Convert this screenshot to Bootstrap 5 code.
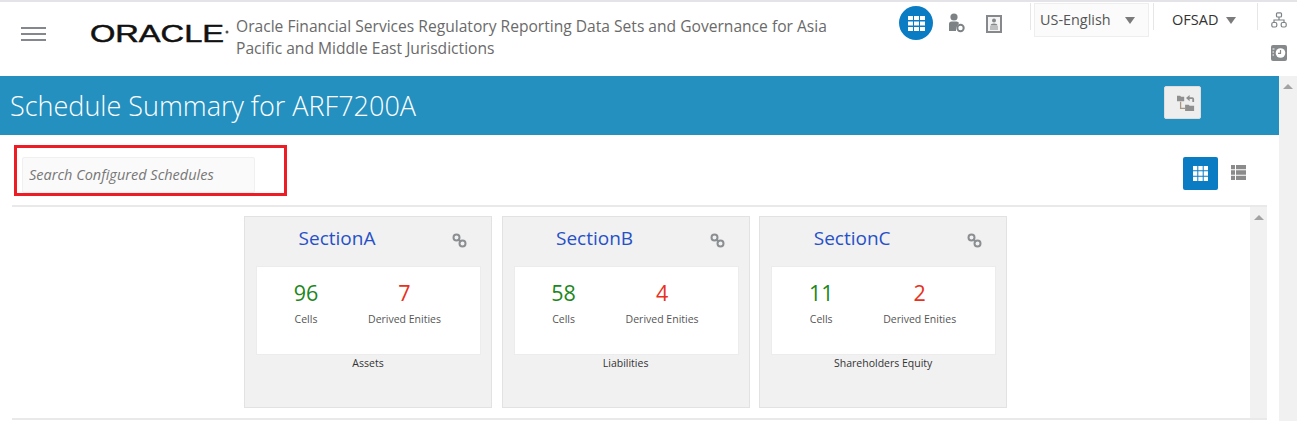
<!DOCTYPE html>
<html lang="en">
<head>
    <meta charset="UTF-8">
    <title>Schedule Summary</title>
    <link href="https://cdn.jsdelivr.net/npm/bootstrap@5.3.0/dist/css/bootstrap.min.css" rel="stylesheet">
    <style>
        html, body { height: 421px; overflow: hidden; }
        body { font-family: "Open Sans", "Liberation Sans", sans-serif; color: #333; background: #fff; }
        .top-head { height: 76px; border-top: 2px solid #e4e4e8; }
        .burger { width: 25px; margin: 25px 0 0 21px; }
        .burger span { display: block; height: 2px; background: #84888c; margin-bottom: 4px; }
        .brand-logo { margin: 22px 0 0 44px; width: 142px; height: 24px; overflow: visible; }
        .app-title { width: 610px; margin: 13px 0 0 4px; font-size: 15.6px; line-height: 22px; color: #6a6a6a; }
        .top-tools { margin-left: auto; }
        .apps-round { width: 34px; height: 34px; border-radius: 50%; background: #0a7cc4; margin: 4px 0 0 0; }
        .tool-person { margin: 11px 0 0 15px; }
        .tool-card { margin: 13px 28px 0 21px; }
        .v-sep { width: 1px; height: 27px; background: #e6e6e6; margin-top: 1px; }
        .lang-box { width: 115px; height: 34px; margin: 1px 4px 0 3px; padding: 0 5px; background: #fbfbfb; border: 1px solid #eee; font-size: 14.4px; color: #555; }
        .caret-dn { width: 0; height: 0; border-left: 5.5px solid transparent; border-right: 5.5px solid transparent; border-top: 7px solid #7b7b7b; }
        .user-box { width: 103px; padding-left: 18px; font-size: 14.5px; color: #333; height: 34px; margin-top: 1px; }
        .side-tools { width: 39px; padding: 10px 0 0 13px; gap: 17px; }
        .work-wrap { height: 345px; }
        .main-pane { width: 1279px; }
        .page-bar { height: 59px; background: #2490c0; padding: 0 78px 0 10px; }
        .page-bar h1 { font-size: 27px; font-weight: 300; color: #fff; margin: 1px 0 0 0; }
        .swap-btn { width: 37px; height: 33px; background: #eeeeee; border: 1px solid #ddd; border-radius: 2px; margin-bottom: 6px; padding: 0 0 0 7px; }
        .tool-row { height: 72px; margin-left: 12px; margin-right: 12px; border-bottom: 2px solid #e9e9e9; padding: 10px 21px 0 2px; }
        .search-mark { width: 273px; height: 51px; border: 3px solid #ee1c25; padding: 9px 0 0 5px; }
        .search-inp { width: 233px; height: 36px; background: #fafafa; border: 1px solid #f0f0f0; border-radius: 2px; padding: 0 6px 2px 6px; font-size: 14.5px; font-style: italic; color: #777; }
        .search-inp::placeholder { color: #777; opacity: 1; }
        .grid-on { width: 35px; height: 33px; background: #0a7cc4; border: 0; border-radius: 2px; margin-top: 12px; }
        .grid-off { margin: 12px 0 0 13px; }
        .cards-pane { margin-left: 12px; margin-right: 12px; height: 213px; border-bottom: 2px solid #e9e9e9; }
        .cards-area { padding: 9px 0 0 232px; gap: 9.6px; }
        .sec-card { width: 248px; height: 192px; background: #f1f1f1; border: 1px solid #e2e2e2; padding: 0 11px; }
        .sec-head { height: 49px; padding: 7px 0 0 0; }
        .sec-name { font-size: 19px; color: #2650c8; width: 162px; text-align: center; }
        .link-ico { margin: 9px 0 0 34px; }
        .num-box { height: 89px; width: 225px; background: #fff; border: 1px solid #ececec; padding-top: 10px; }
        .num-col { text-align: center; }
        .num-left { width: 98px; }
        .num-right { width: 99px; }
        .num-val { font-size: 21.5px; line-height: 32px; }
        .num-lbl { font-size: 10.5px; color: #555; line-height: 16px; margin-top: 2px; }
        .num-green { color: #1c871c; }
        .num-red { color: #e8301c; }
        .sec-foot { font-size: 10.5px; color: #333; text-align: center; line-height: 17px; }
        .bar-inner { width: 17px; background: #f1f1f1; }
        .bar-outer { width: 18px; background: #f1f1f1; }
        .arrow-up { width: 0; height: 0; border-left: 5px solid transparent; border-right: 5px solid transparent; border-bottom: 5px solid #a3a3a3; margin: 0 auto; }
    </style>
</head>
<body>

<header class="top-head d-flex">
    <div class="burger"><span></span><span></span><span></span></div>
    <svg class="brand-logo" viewBox="0 0 142 24" role="img" aria-label="Oracle">
        <text x="0" y="18" font-family="Liberation Sans" font-size="23" textLength="134" lengthAdjust="spacingAndGlyphs" fill="#111" stroke="#111" stroke-width="0.5">ORACLE</text>
        <circle cx="137" cy="8" r="1.5" fill="#555"/>
    </svg>
    <div class="app-title">Oracle Financial Services Regulatory Reporting Data Sets and Governance for Asia Pacific and Middle East Jurisdictions</div>
    <div class="top-tools d-flex">
        <div class="apps-round d-flex align-items-center justify-content-center">
            <svg width="17" height="15" viewBox="0 0 17 15" fill="#fff"><path d="M0 0h5v4H0zM6 0h5v4H6zM12 0h5v4h-5zM0 5.500h5v4H0zM6 5.500h5v4H6zM12 5.500h5v4h-5zM0 11h5v4H0zM6 11h5v4H6zM12 11h5v4h-5z"/></svg>
        </div>
        <svg class="tool-person" width="17" height="20" viewBox="0 0 17 20" fill="#7d8285">
            <circle cx="6" cy="4" r="3.600"/>
            <path d="M1 18V11q0-2.500 2.500-2.500h5q2 0 2.500 1.500l-3 5v3z"/>
            <circle cx="12.500" cy="15" r="3.200" fill="none" stroke="#7d8285" stroke-width="2"/>
        </svg>
        <svg class="tool-card" width="16" height="18" viewBox="0 0 16 18">
            <rect x="1" y="1" width="14" height="16" fill="#f4f4f4" stroke="#85898c" stroke-width="2"/>
            <circle cx="8" cy="5.500" r="2" fill="#85898c"/>
            <path d="M4.500 10.500q0-2 3.500-2t3.500 2zM4 11.500h8v1H4zM4 13.500h8v1H4z" fill="#85898c"/>
        </svg>
        <div class="v-sep"></div>
        <div class="lang-box d-flex align-items-center justify-content-between"><span>US-English</span><i class="caret-dn me-2"></i></div>
        <div class="v-sep"></div>
        <div class="user-box d-flex align-items-center"><span>OFSAD</span><i class="caret-dn ms-2"></i></div>
        <div class="v-sep"></div>
        <div class="side-tools d-flex flex-column">
            <svg width="16" height="16" viewBox="0 0 16 16" fill="none" stroke="#7d8285" stroke-width="1.200">
                <rect x="5.500" y="0.800" width="5" height="4.200" rx="1"/>
                <path d="M8 5v3M3 10.500V8h10v2.500"/>
                <rect x="0.800" y="10.500" width="5" height="4.500" rx="1.500"/>
                <rect x="10.200" y="10.500" width="5" height="4.500" rx="1.500"/>
            </svg>
            <svg width="16" height="16" viewBox="0 0 16 16">
                <rect width="16" height="16" rx="2" fill="#85898c"/>
                <circle cx="9.500" cy="8" r="4.800" fill="#fff"/>
                <path d="M9.500 5v3.300H7" fill="none" stroke="#85898c" stroke-width="1.200"/>
                <path d="M1.500 4h2M1.500 7h1.500M1.500 10h1.500" stroke="#fff"/>
            </svg>
        </div>
    </div>
</header>

<div class="work-wrap d-flex">
    <div class="main-pane">
        <div class="page-bar d-flex align-items-center justify-content-between">
            <h1>Schedule Summary for ARF7200A</h1>
            <button type="button" class="swap-btn d-flex align-items-center justify-content-center">
                <svg width="18" height="18" viewBox="0 0 20 20" fill="#8f8f8f">
                    <path d="M0 2h3.500l1 1H8v5H0z"/>
                    <path d="M9 12h4l1 1h5v6H9z"/>
                    <path d="M4 8.500V16h5" fill="none" stroke="#a9977f" stroke-width="1.400"/>
                    <path d="M10 4.500L14 1v2.500h3q2 0 2 2V9h-2V5.500h-3V8z"/>
                </svg>
            </button>
        </div>
        <div class="tool-row d-flex justify-content-between align-items-start">
            <div class="search-mark">
                <input type="text" class="search-inp d-block" placeholder="Search Configured Schedules">
            </div>
            <div class="d-flex align-items-start">
                <button type="button" class="grid-on d-flex align-items-center justify-content-center p-0">
                    <svg width="15" height="15" viewBox="0 0 15 15" fill="#fff"><path d="M0 0h4.300v4.300H0zM5.300 0h4.400v4.300H5.300zM10.700 0H15v4.300h-4.300zM0 5.300h4.300v4.400H0zM5.300 5.300h4.400v4.400H5.300zM10.700 5.300H15v4.400h-4.300zM0 10.700h4.300V15H0zM5.300 10.700h4.400V15H5.300zM10.700 10.700H15V15h-4.300z"/></svg>
                </button>
                <svg class="grid-off mt-3 pt-1" width="15" height="19" viewBox="0 0 15 15" fill="#8b8b8b"><path d="M0 0h4v4.300H0zM5 0h10v4.300H5zM0 5.300h4v4.400H0zM5 5.300h10v4.400H5zM0 10.700h4V15H0zM5 10.700h10V15H5z"/></svg>
            </div>
        </div>
        <div class="cards-pane d-flex justify-content-between">
            <div class="cards-area d-flex align-items-start" id="cards"></div>
            <div class="bar-inner pt-2"><div class="arrow-up"></div></div>
        </div>
    </div>
    <div class="bar-outer pt-2 flex-shrink-0"><div class="arrow-up"></div></div>
</div>

<script>
    // one entry per configured section
    const sections = [
        { name: 'SectionA', cells: 96, derived: 7, foot: 'Assets' },
        { name: 'SectionB', cells: 58, derived: 4, foot: 'Liabilities' },
        { name: 'SectionC', cells: 11, derived: 2, foot: 'Shareholders Equity' }
    ];
    const linkIcon = '<svg class="link-ico" width="15" height="15" viewBox="0 0 15 15" fill="none" stroke="#8b8f92" stroke-width="2">'
        + '<circle cx="4.500" cy="4.500" r="3"/><circle cx="10.500" cy="10.500" r="3"/><path d="M6 6l3 3"/></svg>';
    document.getElementById('cards').innerHTML = sections.map(s => `
        <div class="sec-card flex-shrink-0">
            <div class="sec-head d-flex">
                <div class="sec-name">${s.name}</div>${linkIcon}
            </div>
            <div class="num-box d-flex">
                <div class="num-col num-left"><div class="num-val num-green">${s.cells}</div><div class="num-lbl">Cells</div></div>
                <div class="num-col num-right"><div class="num-val num-red">${s.derived}</div><div class="num-lbl">Derived Enities</div></div>
            </div>
            <div class="sec-foot">${s.foot}</div>
        </div>`).join('');
</script>

<script src="https://cdn.jsdelivr.net/npm/bootstrap@5.3.0/dist/js/bootstrap.bundle.min.js"></script>
</body>
</html>
